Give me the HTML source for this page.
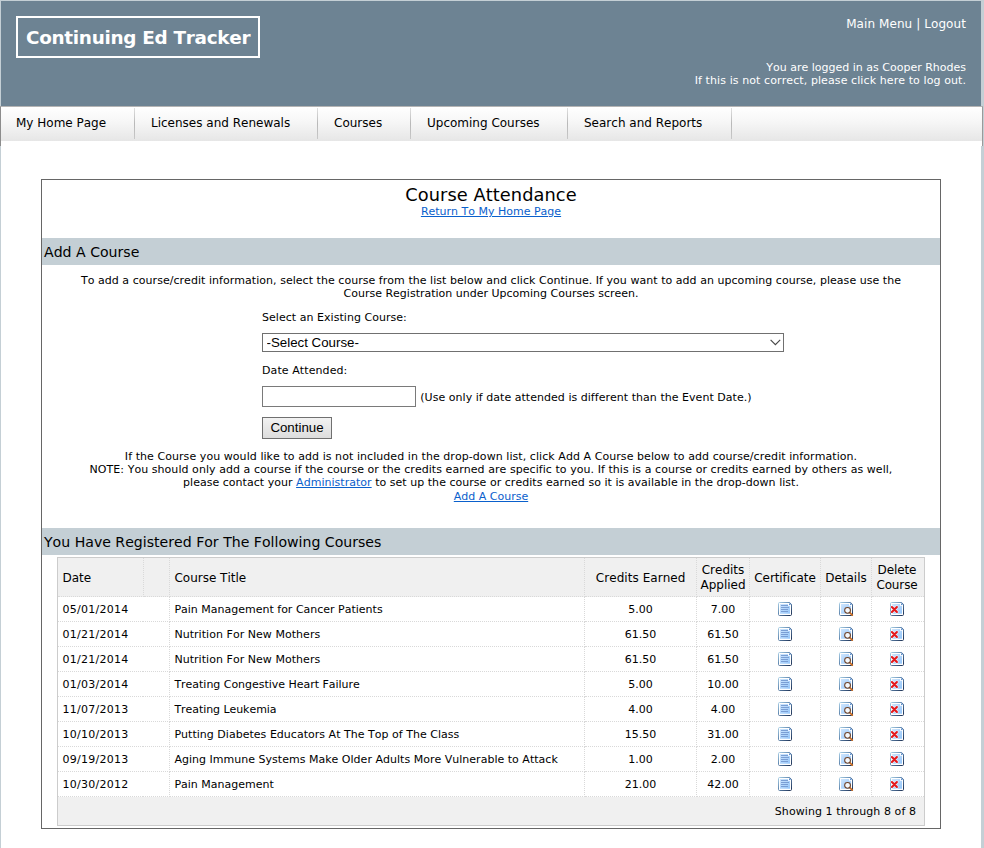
<!DOCTYPE html>
<html lang="en">
<head>
<meta charset="utf-8">
<title>Continuing Ed Tracker - Course Attendance</title>
<style>
*{box-sizing:border-box}
html,body{margin:0;padding:0}
body{width:984px;height:848px;overflow:hidden;background:#c4cfd5;font-family:"DejaVu Sans","Liberation Sans",sans-serif;font-size:11px;line-height:13px;letter-spacing:0;font-kerning:none;color:#000;position:relative}
a{color:#0a60cc;text-decoration:underline}
#wrap{position:absolute;left:1px;top:1px;width:980px;height:847px;background:#fff}
#header{position:absolute;left:0;top:0;width:980px;height:105px;background:#6d8393;color:#fff}
#logo{position:absolute;left:15px;top:15px;width:244px;height:42px;border:2px solid #fff;font-weight:bold;font-size:18.4px;line-height:39px;padding-left:8px;white-space:nowrap;letter-spacing:-0.29px}
#toplinks{position:absolute;right:15px;top:16px;font-size:12px;line-height:15px;white-space:nowrap;letter-spacing:0.08px}
#toplinks a{color:#fff;text-decoration:none}
#login{position:absolute;right:15px;top:60px;font-size:11px;line-height:13px;text-align:right;white-space:nowrap;letter-spacing:0}
#nav{position:absolute;left:-1px;top:105px;width:983px;height:40px;background:#fff linear-gradient(#ffffff,#f6f6f6 45%,#e6e6e6) no-repeat 0 0/100% 34px;border-left:1px solid #8c8c8c;border-right:1px solid #9a9a9a;border-top:1px solid #b4b4b4;font-size:12px;letter-spacing:0;margin:0;padding:0;list-style:none}
#nav li{position:absolute;top:-1px;height:35px;line-height:34px;padding-left:16px;white-space:nowrap}
#nav li:after{content:"";position:absolute;right:0;top:2px;width:1px;height:31px;background:linear-gradient(#e0e0e0,#b8b8b8 50%,#c8c8c8)}
#nav li a{color:#000;text-decoration:none}
#box{position:absolute;left:40px;top:178px;width:900px;height:650px;border:1px solid #666;background:#fff}
h1{margin:0;position:absolute;left:0;top:4px;width:898px;text-align:center;font-weight:normal;font-size:17.8px;line-height:22px;letter-spacing:0.07px}
#ret{position:absolute;left:0;top:25px;width:898px;text-align:center;letter-spacing:0}
.sec{position:absolute;left:0;width:898px;height:27px;background:#c4cfd5;font-size:14.1px;line-height:29px;padding-left:2px;font-weight:normal;margin:0;letter-spacing:0}
.c{position:absolute;left:0;width:898px;text-align:center;margin:0}
.lbl{position:absolute;left:220px;white-space:nowrap}
#sel{position:absolute;left:220px;top:153px;width:522px;height:19px;border:1px solid #707070;background:#fff;font-family:"Liberation Sans",sans-serif;font-size:13.3px;line-height:17px;letter-spacing:0}
#sel svg{position:absolute;right:2.3px;top:5px;pointer-events:none}
#sel select{-webkit-appearance:none;appearance:none;display:block;position:absolute;left:0;top:0;width:520px;height:17px;margin:0;border:0;border-radius:0;outline:0;background:transparent;color:#000;font:inherit;line-height:17px;letter-spacing:0;padding:0 0 0 3.5px}
#date{-webkit-appearance:none;appearance:none;display:block;position:absolute;left:220px;top:206px;width:154px;height:21px;margin:0;padding:0 2px;border:1px solid #7a7a7a;border-radius:0;outline:0;background:#fff;font-family:"Liberation Sans",sans-serif;font-size:13.3px}
#btn{-webkit-appearance:none;appearance:none;display:block;position:absolute;left:220px;top:237px;width:70px;height:22px;margin:0;padding:0 0 2px;border-radius:0;outline:0;border:1px solid #707070;background:linear-gradient(#f2f2f2,#ddd);font-family:"Liberation Sans",sans-serif;font-size:13.3px;line-height:19px;text-align:center;color:#000;letter-spacing:0}
table{position:absolute;left:15px;top:377px;width:868px;border-collapse:collapse;border:1px solid #ccc;font-size:11px}
th{background:#f0f0f0;font-weight:normal;font-size:12px;line-height:15px;height:39px;padding:2px 0 0;letter-spacing:0;border:1px dotted #d9d9d9;text-align:center}
td{height:25px;padding:0;letter-spacing:0;border:1px dotted #d9d9d9;text-align:center;background:#fff}
th.l,td.l{text-align:left;padding-left:4.5px}
td.d{letter-spacing:0.26px}
th:last-child,tbody td:last-child{padding-right:2px}
tfoot td{background:#f0f0f0;letter-spacing:0.083px;height:29px;text-align:right;padding-right:8px;border:none}
.ic{display:block;margin:0 auto;width:16px;height:16px}
td a{display:block}
</style>
</head>
<body>
<svg width="0" height="0" style="position:absolute" aria-hidden="true"><defs>
<linearGradient id="gS" x1="0" y1="0" x2="1" y2="1"><stop offset="0" stop-color="#a9cfe6"/><stop offset="0.45" stop-color="#5f86ae"/><stop offset="1" stop-color="#1c2f52"/></linearGradient>
<linearGradient id="gF" x1="0" y1="0" x2="1" y2="1"><stop offset="0" stop-color="#cfe5fd"/><stop offset="1" stop-color="#94c6fa"/></linearGradient>
</defs></svg>
<div id="wrap">
 <div id="header">
  <div id="logo">Continuing Ed Tracker</div>
  <div id="toplinks"><a href="#">Main Menu</a> | <a href="#">Logout</a></div>
  <div id="login">You are logged in as Cooper Rhodes<br><span style="letter-spacing:0.094px;margin-right:-0.09px">If this is not correct, please click here to log out.</span></div>
 </div>
 <ul id="nav">
  <li style="left:0;width:134px;padding-left:15px"><a href="#">My Home Page</a></li>
  <li style="left:134px;width:183px"><a href="#">Licenses and Renewals</a></li>
  <li style="left:317px;width:93px"><a href="#">Courses</a></li>
  <li style="left:410px;width:157px"><a href="#">Upcoming Courses</a></li>
  <li style="left:567px;width:164px"><a href="#">Search and Reports</a></li>
 </ul>
 <div id="box">
  <h1>Course Attendance</h1>
  <div id="ret"><a href="#">Return To My Home Page</a></div>
  <h2 class="sec" style="top:58px">Add A Course</h2>
  <p class="c" style="top:94px"><span style="letter-spacing:0.041px">To add a course/credit information, select the course from the list below and click Continue. If you want to add an upcoming course, please use the</span><br>Course Registration under Upcoming Courses screen.</p>
  <div class="lbl" style="top:131px;letter-spacing:0.04px">Select an Existing Course:</div>
  <div id="sel"><select name="course" aria-label="Select an Existing Course"><option>-Select Course-</option></select><svg width="11" height="7" viewBox="0 0 11 7"><path d="M0.6 0.8L5.4 5.6L10.2 0.8" fill="none" stroke="#484848" stroke-width="1.15"/></svg></div>
  <div class="lbl" style="top:184px;letter-spacing:0.09px">Date Attended:</div>
  <input id="date" type="text" name="dateAttended" aria-label="Date Attended">
  <div class="lbl" style="top:211px;left:378.3px;letter-spacing:0.034px">(Use only if date attended is different than the Event Date.)</div>
  <button id="btn" type="button">Continue</button>
  <p class="c" style="top:270px"><span style="letter-spacing:0.064px">If the Course you would like to add is not included in the drop-down list, click Add A Course below to add course/credit information.</span><br><span style="letter-spacing:0.054px">NOTE: You should only add a course if the course or the credits earned are specific to you. If this is a course or credits earned by others as well,</span><br><span style="letter-spacing:0.03px">please contact your <a href="#">Administrator</a> to set up the course or credits earned so it is available in the drop-down list.</span></p>
  <div class="c" style="top:310px"><a href="#">Add A Course</a></div>
  <h2 class="sec" style="top:348px;line-height:29px;letter-spacing:0">You Have Registered For The Following Courses</h2>
  <table>
   <colgroup><col style="width:86px"><col style="width:26px"><col style="width:416px"><col style="width:112px"><col style="width:53px"><col style="width:71px"><col style="width:51px"><col style="width:53px"></colgroup>
   <thead><tr><th class="l">Date</th><th></th><th class="l">Course Title</th><th style="letter-spacing:0.05px">Credits Earned</th><th>Credits Applied</th><th style="letter-spacing:-0.09px">Certificate</th><th>Details</th><th style="letter-spacing:-0.12px">Delete Course</th></tr></thead>
   <tfoot><tr><td colspan="8">Showing 1 through 8 of 8</td></tr></tfoot>
   <tbody>
    <tr><td class="l d" colspan="2">05/01/2014</td><td class="l">Pain Management for Cancer Patients</td><td>5.00</td><td>7.00</td><td><a href="#" title="Certificate"><svg class="ic" viewBox="0 0 16 16" width="16" height="16"><path d="M2.6 1.5H12.6L14.5 3.4V13.4Q14.5 14.5 13.4 14.5H2.6Q1.5 14.5 1.5 13.4V2.6Q1.5 1.5 2.6 1.5Z" fill="#fff" stroke="url(#gS)"/><path d="M3 3H11V4.8H13V12.8H3Z" fill="url(#gF)"/><path d="M12 2V4H14Z" fill="#5b8fd0"/><path d="M12.4 1.6L14.4 3.6" stroke="#4f76a6" stroke-width="0.9" fill="none"/><path d="M4 4.5H11M4 6.5H12M4 8.5H11M4 10.5H11" stroke="#7397cf" stroke-width="0.9" fill="none"/></svg></a></td><td><a href="#" title="Details"><svg class="ic" viewBox="0 0 16 16" width="16" height="16"><path d="M2.6 1.5H12.6L14.5 3.4V13.4Q14.5 14.5 13.4 14.5H2.6Q1.5 14.5 1.5 13.4V2.6Q1.5 1.5 2.6 1.5Z" fill="#fff" stroke="url(#gS)"/><path d="M3 3H11V4.8H13V12.8H3Z" fill="url(#gF)"/><path d="M12 2V4H14Z" fill="#5b8fd0"/><path d="M12.4 1.6L14.4 3.6" stroke="#4f76a6" stroke-width="0.9" fill="none"/><path d="M11.8 11.6L14.3 14.1" stroke="#c8691e" stroke-width="1.7" stroke-linecap="round" fill="none"/><circle cx="9.55" cy="9.3" r="2.9" fill="#f4f8fd" stroke="#6d4126" stroke-width="1.05"/></svg></a></td><td><a href="#" title="Delete Course"><svg class="ic" viewBox="0 0 16 16" width="16" height="16"><path d="M2.6 1.5H12.6L14.5 3.4V13.4Q14.5 14.5 13.4 14.5H2.6Q1.5 14.5 1.5 13.4V2.6Q1.5 1.5 2.6 1.5Z" fill="#fff" stroke="url(#gS)"/><path d="M3 3H11V4.8H13V12.8H3Z" fill="url(#gF)"/><path d="M12 2V4H14Z" fill="#5b8fd0"/><path d="M12.4 1.6L14.4 3.6" stroke="#4f76a6" stroke-width="0.9" fill="none"/><path d="M2.9 6L7.9 11M7.9 6L2.9 11" stroke="#fff" stroke-width="3.2" stroke-linecap="round" fill="none" opacity="0.6"/><path d="M2.9 6L7.9 11M7.9 6L2.9 11" stroke="#e5181b" stroke-width="2.1" stroke-linecap="round" fill="none"/></svg></a></td></tr>
    <tr><td class="l d" colspan="2">01/21/2014</td><td class="l" style="letter-spacing:0.044px">Nutrition For New Mothers</td><td>61.50</td><td>61.50</td><td><a href="#" title="Certificate"><svg class="ic" viewBox="0 0 16 16" width="16" height="16"><path d="M2.6 1.5H12.6L14.5 3.4V13.4Q14.5 14.5 13.4 14.5H2.6Q1.5 14.5 1.5 13.4V2.6Q1.5 1.5 2.6 1.5Z" fill="#fff" stroke="url(#gS)"/><path d="M3 3H11V4.8H13V12.8H3Z" fill="url(#gF)"/><path d="M12 2V4H14Z" fill="#5b8fd0"/><path d="M12.4 1.6L14.4 3.6" stroke="#4f76a6" stroke-width="0.9" fill="none"/><path d="M4 4.5H11M4 6.5H12M4 8.5H11M4 10.5H11" stroke="#7397cf" stroke-width="0.9" fill="none"/></svg></a></td><td><a href="#" title="Details"><svg class="ic" viewBox="0 0 16 16" width="16" height="16"><path d="M2.6 1.5H12.6L14.5 3.4V13.4Q14.5 14.5 13.4 14.5H2.6Q1.5 14.5 1.5 13.4V2.6Q1.5 1.5 2.6 1.5Z" fill="#fff" stroke="url(#gS)"/><path d="M3 3H11V4.8H13V12.8H3Z" fill="url(#gF)"/><path d="M12 2V4H14Z" fill="#5b8fd0"/><path d="M12.4 1.6L14.4 3.6" stroke="#4f76a6" stroke-width="0.9" fill="none"/><path d="M11.8 11.6L14.3 14.1" stroke="#c8691e" stroke-width="1.7" stroke-linecap="round" fill="none"/><circle cx="9.55" cy="9.3" r="2.9" fill="#f4f8fd" stroke="#6d4126" stroke-width="1.05"/></svg></a></td><td><a href="#" title="Delete Course"><svg class="ic" viewBox="0 0 16 16" width="16" height="16"><path d="M2.6 1.5H12.6L14.5 3.4V13.4Q14.5 14.5 13.4 14.5H2.6Q1.5 14.5 1.5 13.4V2.6Q1.5 1.5 2.6 1.5Z" fill="#fff" stroke="url(#gS)"/><path d="M3 3H11V4.8H13V12.8H3Z" fill="url(#gF)"/><path d="M12 2V4H14Z" fill="#5b8fd0"/><path d="M12.4 1.6L14.4 3.6" stroke="#4f76a6" stroke-width="0.9" fill="none"/><path d="M2.9 6L7.9 11M7.9 6L2.9 11" stroke="#fff" stroke-width="3.2" stroke-linecap="round" fill="none" opacity="0.6"/><path d="M2.9 6L7.9 11M7.9 6L2.9 11" stroke="#e5181b" stroke-width="2.1" stroke-linecap="round" fill="none"/></svg></a></td></tr>
    <tr><td class="l d" colspan="2">01/21/2014</td><td class="l" style="letter-spacing:0.044px">Nutrition For New Mothers</td><td>61.50</td><td>61.50</td><td><a href="#" title="Certificate"><svg class="ic" viewBox="0 0 16 16" width="16" height="16"><path d="M2.6 1.5H12.6L14.5 3.4V13.4Q14.5 14.5 13.4 14.5H2.6Q1.5 14.5 1.5 13.4V2.6Q1.5 1.5 2.6 1.5Z" fill="#fff" stroke="url(#gS)"/><path d="M3 3H11V4.8H13V12.8H3Z" fill="url(#gF)"/><path d="M12 2V4H14Z" fill="#5b8fd0"/><path d="M12.4 1.6L14.4 3.6" stroke="#4f76a6" stroke-width="0.9" fill="none"/><path d="M4 4.5H11M4 6.5H12M4 8.5H11M4 10.5H11" stroke="#7397cf" stroke-width="0.9" fill="none"/></svg></a></td><td><a href="#" title="Details"><svg class="ic" viewBox="0 0 16 16" width="16" height="16"><path d="M2.6 1.5H12.6L14.5 3.4V13.4Q14.5 14.5 13.4 14.5H2.6Q1.5 14.5 1.5 13.4V2.6Q1.5 1.5 2.6 1.5Z" fill="#fff" stroke="url(#gS)"/><path d="M3 3H11V4.8H13V12.8H3Z" fill="url(#gF)"/><path d="M12 2V4H14Z" fill="#5b8fd0"/><path d="M12.4 1.6L14.4 3.6" stroke="#4f76a6" stroke-width="0.9" fill="none"/><path d="M11.8 11.6L14.3 14.1" stroke="#c8691e" stroke-width="1.7" stroke-linecap="round" fill="none"/><circle cx="9.55" cy="9.3" r="2.9" fill="#f4f8fd" stroke="#6d4126" stroke-width="1.05"/></svg></a></td><td><a href="#" title="Delete Course"><svg class="ic" viewBox="0 0 16 16" width="16" height="16"><path d="M2.6 1.5H12.6L14.5 3.4V13.4Q14.5 14.5 13.4 14.5H2.6Q1.5 14.5 1.5 13.4V2.6Q1.5 1.5 2.6 1.5Z" fill="#fff" stroke="url(#gS)"/><path d="M3 3H11V4.8H13V12.8H3Z" fill="url(#gF)"/><path d="M12 2V4H14Z" fill="#5b8fd0"/><path d="M12.4 1.6L14.4 3.6" stroke="#4f76a6" stroke-width="0.9" fill="none"/><path d="M2.9 6L7.9 11M7.9 6L2.9 11" stroke="#fff" stroke-width="3.2" stroke-linecap="round" fill="none" opacity="0.6"/><path d="M2.9 6L7.9 11M7.9 6L2.9 11" stroke="#e5181b" stroke-width="2.1" stroke-linecap="round" fill="none"/></svg></a></td></tr>
    <tr><td class="l d" colspan="2">01/03/2014</td><td class="l" style="letter-spacing:-0.024px">Treating Congestive Heart Failure</td><td>5.00</td><td>10.00</td><td><a href="#" title="Certificate"><svg class="ic" viewBox="0 0 16 16" width="16" height="16"><path d="M2.6 1.5H12.6L14.5 3.4V13.4Q14.5 14.5 13.4 14.5H2.6Q1.5 14.5 1.5 13.4V2.6Q1.5 1.5 2.6 1.5Z" fill="#fff" stroke="url(#gS)"/><path d="M3 3H11V4.8H13V12.8H3Z" fill="url(#gF)"/><path d="M12 2V4H14Z" fill="#5b8fd0"/><path d="M12.4 1.6L14.4 3.6" stroke="#4f76a6" stroke-width="0.9" fill="none"/><path d="M4 4.5H11M4 6.5H12M4 8.5H11M4 10.5H11" stroke="#7397cf" stroke-width="0.9" fill="none"/></svg></a></td><td><a href="#" title="Details"><svg class="ic" viewBox="0 0 16 16" width="16" height="16"><path d="M2.6 1.5H12.6L14.5 3.4V13.4Q14.5 14.5 13.4 14.5H2.6Q1.5 14.5 1.5 13.4V2.6Q1.5 1.5 2.6 1.5Z" fill="#fff" stroke="url(#gS)"/><path d="M3 3H11V4.8H13V12.8H3Z" fill="url(#gF)"/><path d="M12 2V4H14Z" fill="#5b8fd0"/><path d="M12.4 1.6L14.4 3.6" stroke="#4f76a6" stroke-width="0.9" fill="none"/><path d="M11.8 11.6L14.3 14.1" stroke="#c8691e" stroke-width="1.7" stroke-linecap="round" fill="none"/><circle cx="9.55" cy="9.3" r="2.9" fill="#f4f8fd" stroke="#6d4126" stroke-width="1.05"/></svg></a></td><td><a href="#" title="Delete Course"><svg class="ic" viewBox="0 0 16 16" width="16" height="16"><path d="M2.6 1.5H12.6L14.5 3.4V13.4Q14.5 14.5 13.4 14.5H2.6Q1.5 14.5 1.5 13.4V2.6Q1.5 1.5 2.6 1.5Z" fill="#fff" stroke="url(#gS)"/><path d="M3 3H11V4.8H13V12.8H3Z" fill="url(#gF)"/><path d="M12 2V4H14Z" fill="#5b8fd0"/><path d="M12.4 1.6L14.4 3.6" stroke="#4f76a6" stroke-width="0.9" fill="none"/><path d="M2.9 6L7.9 11M7.9 6L2.9 11" stroke="#fff" stroke-width="3.2" stroke-linecap="round" fill="none" opacity="0.6"/><path d="M2.9 6L7.9 11M7.9 6L2.9 11" stroke="#e5181b" stroke-width="2.1" stroke-linecap="round" fill="none"/></svg></a></td></tr>
    <tr><td class="l d" colspan="2">11/07/2013</td><td class="l" style="letter-spacing:-0.06px">Treating Leukemia</td><td>4.00</td><td>4.00</td><td><a href="#" title="Certificate"><svg class="ic" viewBox="0 0 16 16" width="16" height="16"><path d="M2.6 1.5H12.6L14.5 3.4V13.4Q14.5 14.5 13.4 14.5H2.6Q1.5 14.5 1.5 13.4V2.6Q1.5 1.5 2.6 1.5Z" fill="#fff" stroke="url(#gS)"/><path d="M3 3H11V4.8H13V12.8H3Z" fill="url(#gF)"/><path d="M12 2V4H14Z" fill="#5b8fd0"/><path d="M12.4 1.6L14.4 3.6" stroke="#4f76a6" stroke-width="0.9" fill="none"/><path d="M4 4.5H11M4 6.5H12M4 8.5H11M4 10.5H11" stroke="#7397cf" stroke-width="0.9" fill="none"/></svg></a></td><td><a href="#" title="Details"><svg class="ic" viewBox="0 0 16 16" width="16" height="16"><path d="M2.6 1.5H12.6L14.5 3.4V13.4Q14.5 14.5 13.4 14.5H2.6Q1.5 14.5 1.5 13.4V2.6Q1.5 1.5 2.6 1.5Z" fill="#fff" stroke="url(#gS)"/><path d="M3 3H11V4.8H13V12.8H3Z" fill="url(#gF)"/><path d="M12 2V4H14Z" fill="#5b8fd0"/><path d="M12.4 1.6L14.4 3.6" stroke="#4f76a6" stroke-width="0.9" fill="none"/><path d="M11.8 11.6L14.3 14.1" stroke="#c8691e" stroke-width="1.7" stroke-linecap="round" fill="none"/><circle cx="9.55" cy="9.3" r="2.9" fill="#f4f8fd" stroke="#6d4126" stroke-width="1.05"/></svg></a></td><td><a href="#" title="Delete Course"><svg class="ic" viewBox="0 0 16 16" width="16" height="16"><path d="M2.6 1.5H12.6L14.5 3.4V13.4Q14.5 14.5 13.4 14.5H2.6Q1.5 14.5 1.5 13.4V2.6Q1.5 1.5 2.6 1.5Z" fill="#fff" stroke="url(#gS)"/><path d="M3 3H11V4.8H13V12.8H3Z" fill="url(#gF)"/><path d="M12 2V4H14Z" fill="#5b8fd0"/><path d="M12.4 1.6L14.4 3.6" stroke="#4f76a6" stroke-width="0.9" fill="none"/><path d="M2.9 6L7.9 11M7.9 6L2.9 11" stroke="#fff" stroke-width="3.2" stroke-linecap="round" fill="none" opacity="0.6"/><path d="M2.9 6L7.9 11M7.9 6L2.9 11" stroke="#e5181b" stroke-width="2.1" stroke-linecap="round" fill="none"/></svg></a></td></tr>
    <tr><td class="l d" colspan="2">10/10/2013</td><td class="l" style="letter-spacing:0.024px">Putting Diabetes Educators At The Top of The Class</td><td>15.50</td><td>31.00</td><td><a href="#" title="Certificate"><svg class="ic" viewBox="0 0 16 16" width="16" height="16"><path d="M2.6 1.5H12.6L14.5 3.4V13.4Q14.5 14.5 13.4 14.5H2.6Q1.5 14.5 1.5 13.4V2.6Q1.5 1.5 2.6 1.5Z" fill="#fff" stroke="url(#gS)"/><path d="M3 3H11V4.8H13V12.8H3Z" fill="url(#gF)"/><path d="M12 2V4H14Z" fill="#5b8fd0"/><path d="M12.4 1.6L14.4 3.6" stroke="#4f76a6" stroke-width="0.9" fill="none"/><path d="M4 4.5H11M4 6.5H12M4 8.5H11M4 10.5H11" stroke="#7397cf" stroke-width="0.9" fill="none"/></svg></a></td><td><a href="#" title="Details"><svg class="ic" viewBox="0 0 16 16" width="16" height="16"><path d="M2.6 1.5H12.6L14.5 3.4V13.4Q14.5 14.5 13.4 14.5H2.6Q1.5 14.5 1.5 13.4V2.6Q1.5 1.5 2.6 1.5Z" fill="#fff" stroke="url(#gS)"/><path d="M3 3H11V4.8H13V12.8H3Z" fill="url(#gF)"/><path d="M12 2V4H14Z" fill="#5b8fd0"/><path d="M12.4 1.6L14.4 3.6" stroke="#4f76a6" stroke-width="0.9" fill="none"/><path d="M11.8 11.6L14.3 14.1" stroke="#c8691e" stroke-width="1.7" stroke-linecap="round" fill="none"/><circle cx="9.55" cy="9.3" r="2.9" fill="#f4f8fd" stroke="#6d4126" stroke-width="1.05"/></svg></a></td><td><a href="#" title="Delete Course"><svg class="ic" viewBox="0 0 16 16" width="16" height="16"><path d="M2.6 1.5H12.6L14.5 3.4V13.4Q14.5 14.5 13.4 14.5H2.6Q1.5 14.5 1.5 13.4V2.6Q1.5 1.5 2.6 1.5Z" fill="#fff" stroke="url(#gS)"/><path d="M3 3H11V4.8H13V12.8H3Z" fill="url(#gF)"/><path d="M12 2V4H14Z" fill="#5b8fd0"/><path d="M12.4 1.6L14.4 3.6" stroke="#4f76a6" stroke-width="0.9" fill="none"/><path d="M2.9 6L7.9 11M7.9 6L2.9 11" stroke="#fff" stroke-width="3.2" stroke-linecap="round" fill="none" opacity="0.6"/><path d="M2.9 6L7.9 11M7.9 6L2.9 11" stroke="#e5181b" stroke-width="2.1" stroke-linecap="round" fill="none"/></svg></a></td></tr>
    <tr><td class="l d" colspan="2">09/19/2013</td><td class="l" style="letter-spacing:0.017px">Aging Immune Systems Make Older Adults More Vulnerable to Attack</td><td>1.00</td><td>2.00</td><td><a href="#" title="Certificate"><svg class="ic" viewBox="0 0 16 16" width="16" height="16"><path d="M2.6 1.5H12.6L14.5 3.4V13.4Q14.5 14.5 13.4 14.5H2.6Q1.5 14.5 1.5 13.4V2.6Q1.5 1.5 2.6 1.5Z" fill="#fff" stroke="url(#gS)"/><path d="M3 3H11V4.8H13V12.8H3Z" fill="url(#gF)"/><path d="M12 2V4H14Z" fill="#5b8fd0"/><path d="M12.4 1.6L14.4 3.6" stroke="#4f76a6" stroke-width="0.9" fill="none"/><path d="M4 4.5H11M4 6.5H12M4 8.5H11M4 10.5H11" stroke="#7397cf" stroke-width="0.9" fill="none"/></svg></a></td><td><a href="#" title="Details"><svg class="ic" viewBox="0 0 16 16" width="16" height="16"><path d="M2.6 1.5H12.6L14.5 3.4V13.4Q14.5 14.5 13.4 14.5H2.6Q1.5 14.5 1.5 13.4V2.6Q1.5 1.5 2.6 1.5Z" fill="#fff" stroke="url(#gS)"/><path d="M3 3H11V4.8H13V12.8H3Z" fill="url(#gF)"/><path d="M12 2V4H14Z" fill="#5b8fd0"/><path d="M12.4 1.6L14.4 3.6" stroke="#4f76a6" stroke-width="0.9" fill="none"/><path d="M11.8 11.6L14.3 14.1" stroke="#c8691e" stroke-width="1.7" stroke-linecap="round" fill="none"/><circle cx="9.55" cy="9.3" r="2.9" fill="#f4f8fd" stroke="#6d4126" stroke-width="1.05"/></svg></a></td><td><a href="#" title="Delete Course"><svg class="ic" viewBox="0 0 16 16" width="16" height="16"><path d="M2.6 1.5H12.6L14.5 3.4V13.4Q14.5 14.5 13.4 14.5H2.6Q1.5 14.5 1.5 13.4V2.6Q1.5 1.5 2.6 1.5Z" fill="#fff" stroke="url(#gS)"/><path d="M3 3H11V4.8H13V12.8H3Z" fill="url(#gF)"/><path d="M12 2V4H14Z" fill="#5b8fd0"/><path d="M12.4 1.6L14.4 3.6" stroke="#4f76a6" stroke-width="0.9" fill="none"/><path d="M2.9 6L7.9 11M7.9 6L2.9 11" stroke="#fff" stroke-width="3.2" stroke-linecap="round" fill="none" opacity="0.6"/><path d="M2.9 6L7.9 11M7.9 6L2.9 11" stroke="#e5181b" stroke-width="2.1" stroke-linecap="round" fill="none"/></svg></a></td></tr>
    <tr><td class="l d" colspan="2">10/30/2012</td><td class="l">Pain Management</td><td>21.00</td><td>42.00</td><td><a href="#" title="Certificate"><svg class="ic" viewBox="0 0 16 16" width="16" height="16"><path d="M2.6 1.5H12.6L14.5 3.4V13.4Q14.5 14.5 13.4 14.5H2.6Q1.5 14.5 1.5 13.4V2.6Q1.5 1.5 2.6 1.5Z" fill="#fff" stroke="url(#gS)"/><path d="M3 3H11V4.8H13V12.8H3Z" fill="url(#gF)"/><path d="M12 2V4H14Z" fill="#5b8fd0"/><path d="M12.4 1.6L14.4 3.6" stroke="#4f76a6" stroke-width="0.9" fill="none"/><path d="M4 4.5H11M4 6.5H12M4 8.5H11M4 10.5H11" stroke="#7397cf" stroke-width="0.9" fill="none"/></svg></a></td><td><a href="#" title="Details"><svg class="ic" viewBox="0 0 16 16" width="16" height="16"><path d="M2.6 1.5H12.6L14.5 3.4V13.4Q14.5 14.5 13.4 14.5H2.6Q1.5 14.5 1.5 13.4V2.6Q1.5 1.5 2.6 1.5Z" fill="#fff" stroke="url(#gS)"/><path d="M3 3H11V4.8H13V12.8H3Z" fill="url(#gF)"/><path d="M12 2V4H14Z" fill="#5b8fd0"/><path d="M12.4 1.6L14.4 3.6" stroke="#4f76a6" stroke-width="0.9" fill="none"/><path d="M11.8 11.6L14.3 14.1" stroke="#c8691e" stroke-width="1.7" stroke-linecap="round" fill="none"/><circle cx="9.55" cy="9.3" r="2.9" fill="#f4f8fd" stroke="#6d4126" stroke-width="1.05"/></svg></a></td><td><a href="#" title="Delete Course"><svg class="ic" viewBox="0 0 16 16" width="16" height="16"><path d="M2.6 1.5H12.6L14.5 3.4V13.4Q14.5 14.5 13.4 14.5H2.6Q1.5 14.5 1.5 13.4V2.6Q1.5 1.5 2.6 1.5Z" fill="#fff" stroke="url(#gS)"/><path d="M3 3H11V4.8H13V12.8H3Z" fill="url(#gF)"/><path d="M12 2V4H14Z" fill="#5b8fd0"/><path d="M12.4 1.6L14.4 3.6" stroke="#4f76a6" stroke-width="0.9" fill="none"/><path d="M2.9 6L7.9 11M7.9 6L2.9 11" stroke="#fff" stroke-width="3.2" stroke-linecap="round" fill="none" opacity="0.6"/><path d="M2.9 6L7.9 11M7.9 6L2.9 11" stroke="#e5181b" stroke-width="2.1" stroke-linecap="round" fill="none"/></svg></a></td></tr>
   </tbody>
  </table>
 </div>
</div>
</body>
</html>
